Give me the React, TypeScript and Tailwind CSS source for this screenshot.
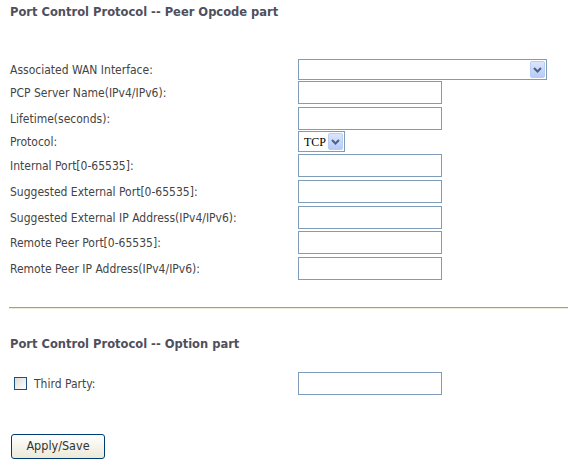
import React from "react"

const font = { fontFamily: '"DejaVu Sans Condensed", "DejaVu Sans", Tahoma, sans-serif' }
const titleFont = { fontFamily: '"DejaVu Sans", Tahoma, sans-serif' }

function Chevron() {
  return (
    <svg width="9" height="6" viewBox="0 0 9 6" className="block">
      <path d="M1 1 L4.5 4.5 L8 1" fill="none" stroke="#4d6185" strokeWidth="2" />
    </svg>
  )
}

function DropButton() {
  return (
    <div className="w-[15px] h-[17px] rounded-[2px] border border-[#b9cdf5] bg-gradient-to-b from-[#dbe6fd] to-[#b7cbf7] flex items-center justify-center">
      <Chevron />
    </div>
  )
}

function TextBox() {
  return <input type="text" className="w-[144px] h-[23px] border border-[#7f9db9] bg-white outline-none" />
}

type Row = { label: string; kind: "wan" | "text" | "proto"; h: string }

const rows: Row[] = [
  { label: "Associated WAN Interface:", kind: "wan", h: "h-[22px]" },
  { label: "PCP Server Name(IPv4/IPv6):", kind: "text", h: "h-[26px]" },
  { label: "Lifetime(seconds):", kind: "text", h: "h-[24px]" },
  { label: "Protocol:", kind: "proto", h: "h-[23px]" },
  { label: "Internal Port[0-65535]:", kind: "text", h: "h-[26px]" },
  { label: "Suggested External Port[0-65535]:", kind: "text", h: "h-[26px]" },
  { label: "Suggested External IP Address(IPv4/IPv6):", kind: "text", h: "h-[25px]" },
  { label: "Remote Peer Port[0-65535]:", kind: "text", h: "h-[26px]" },
  { label: "Remote Peer IP Address(IPv4/IPv6):", kind: "text", h: "h-[26px]" },
]

export default function App() {
  return (
    <div className="w-[568px] h-[461px] bg-white text-[12px] text-[#444] pl-[10px] pt-[5px]" style={font}>
      {/* Peer opcode part */}
      <div className="font-bold text-[11.5px] text-[#4f4f5c] leading-[15px]" style={titleFont}>
        Port Control Protocol -- Peer Opcode part
      </div>

      <div className="mt-[39px]">
        {rows.map((r) => (
          <div key={r.label} className={`flex items-start ${r.h}`}>
            <div className={`w-[288px] flex items-center ${r.kind === "proto" || r.kind === "wan" ? "h-[21px]" : "h-[23px]"}`}>
              {r.label}
            </div>
            {r.kind === "wan" && (
              <div className="w-[249px] h-[21px] border border-[#7f9db9] bg-white flex items-center justify-end pr-px">
                <DropButton />
              </div>
            )}
            {r.kind === "text" && <TextBox />}
            {r.kind === "proto" && (
              <div className="w-[47px] h-[21px] border border-[#7f9db9] bg-white flex items-center justify-between pl-[5px] pr-px">
                <span className="text-[12px] font-normal leading-none text-black" style={{ fontFamily: '"Liberation Serif", serif' }}>
                  TCP
                </span>
                <DropButton />
              </div>
            )}
          </div>
        ))}
      </div>

      <div className="mt-[24px] -ml-px border-t border-[#a0a090] border-b border-b-[#efebd8]" />

      {/* Option part */}
      <div className="mt-[28px] font-bold text-[11.5px] text-[#4f4f5c] leading-[15px]" style={titleFont}>
        Port Control Protocol -- Option part
      </div>

      <div className="mt-[20px] flex items-center h-[23px]">
        <div className="w-[288px] flex items-center">
          <span className="ml-[4px] w-[13px] h-[13px] border border-[#1c5180] bg-gradient-to-br from-[#dcdcd7] to-white" />
          <span className="ml-[7px]">Third Party:</span>
        </div>
        <TextBox />
      </div>

      <div className="mt-[39px]">
        <button className="w-[94px] h-[25px] ml-px rounded-[3px] border border-[#003c74] bg-gradient-to-b from-white to-[#ece9d8] text-[12.5px] text-[#333]" style={font}>
          Apply/Save
        </button>
      </div>
    </div>
  )
}
